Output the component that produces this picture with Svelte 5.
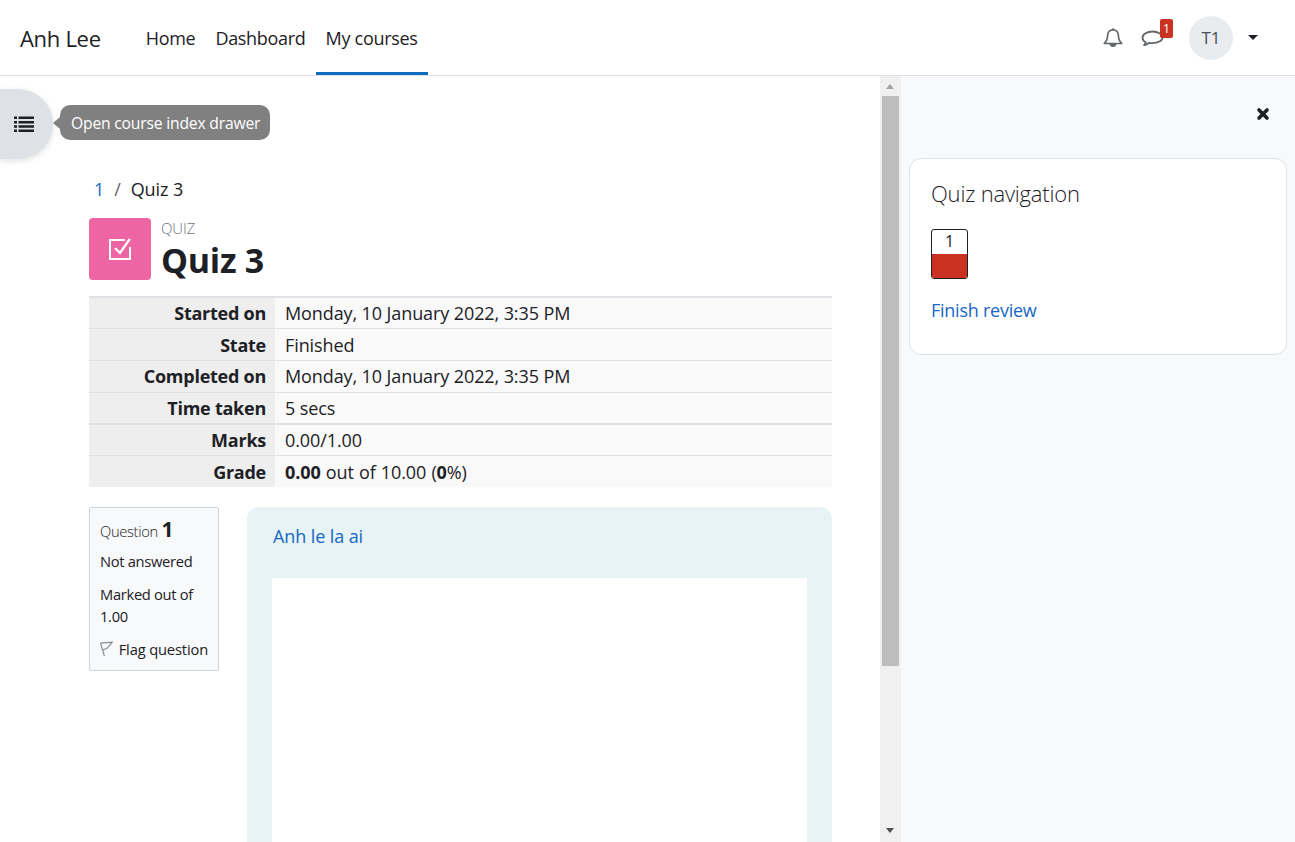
<script>
  const rows = [
    { label: 'Started on', value: 'Monday, 10 January 2022, 3:35 PM', short: true },
    { label: 'State', value: 'Finished', low: true },
    { label: 'Completed on', value: 'Monday, 10 January 2022, 3:35 PM' },
    { label: 'Time taken', value: '5 secs', thick: true },
    { label: 'Marks', value: '0.00/1.00', short: true }
  ];
</script>

<div class="page">
  <header class="topbar">
    <a class="brand" href="#a">Anh Lee</a>
    <nav class="nav">
      <a href="#a">Home</a>
      <a href="#a">Dashboard</a>
      <a href="#a" class="active">My courses</a>
    </nav>
    <div class="tools">
      <svg class="bell" width="22" height="22" viewBox="0 0 22 22" fill="none" stroke="#63676b" stroke-width="1.700" aria-hidden="true">
        <path d="M11 2.800c-3.600 0-5.400 2.700-5.400 5.800 0 4.400-1.400 6.200-3.300 7.900h17.400c-1.900-1.700-3.300-3.500-3.300-7.900 0-3.100-1.800-5.800-5.400-5.800z" stroke-linejoin="round"/>
        <path d="M8.500 17.500c.4 2.200 4.600 2.200 5 0z" fill="#63676b"/>
        <path d="M11 1.200v1.600"/>
      </svg>
      <span class="msg">
        <svg width="24" height="22" viewBox="0 0 24 22" fill="none" stroke="#63676b" stroke-width="1.800" aria-hidden="true">
          <path d="M11.500 4.500c-5.200 0-10 2.800-10 6.200 0 2 1.300 3.500 3.200 4.500-.2 1.200-.8 2.200-1.600 3 2-.3 3.700-1.200 4.700-2.400 1.200.2 2.400.3 3.700.3 5.200 0 10-2.400 10-5.400 0-3.400-4.800-6.200-10-6.200z" stroke-linejoin="round"/>
        </svg>
        <span class="badge">1</span>
      </span>
      <span class="avatar">T1</span>
      <span class="caret"></span>
    </div>
  </header>

  <div class="body">
    <main class="main">
      <div class="content">
        <div class="crumbs"><a href="#a">1</a><span class="sep">/</span><span>Quiz 3</span></div>
        <div class="heading">
          <span class="modicon">
            <svg width="22" height="22" viewBox="0 0 22 22" fill="none" stroke="#fff" stroke-width="2" aria-hidden="true">
              <path d="M21 9v12H1V2h15"/>
              <path d="M6 10l5 5L20.800 1" stroke-width="2.200"/>
            </svg>
          </span>
          <div class="titles">
            <div class="kicker">QUIZ</div>
            <h1>Quiz 3</h1>
          </div>
        </div>

        <table class="summary">
          <tbody>
            {#each rows as row}
              <tr class:thick={row.thick} class:short={row.short} class:low={row.low}>
                <th>{row.label}</th>
                <td>{row.value}</td>
              </tr>
            {/each}
            <tr class="low">
              <th>Grade</th>
              <td class="spaced"><b>0.00</b> out of 10.00 (<b>0</b>%)</td>
            </tr>
          </tbody>
        </table>

        <div class="question">
          <aside class="info">
            <div class="qno">Question <b>1</b></div>
            <div class="state">Not answered</div>
            <div class="grade">Marked out of 1.00</div>
            <div class="flag">
              <svg width="14" height="16" viewBox="0 0 14 16" fill="none" stroke="#84898e" stroke-width="1.200" aria-hidden="true">
                <path d="M.5 2l4 13M.5 2L12.500 1 7 7.500 2.500 9"/>
              </svg>
              <span>Flag question</span>
            </div>
          </aside>
          <div class="qbody">
            <a href="#a">Anh le la ai</a>
            <div class="frame"></div>
          </div>
        </div>
      </div>

      <div class="scrollbar">
        <span class="arrow up"></span>
        <span class="thumb"></span>
        <span class="arrow down"></span>
      </div>
    </main>

    <aside class="drawer">
      <div class="drawer-head">
        <svg width="14" height="14" viewBox="0 0 14 14" aria-hidden="true">
          <path d="M3 3l8 8M11 3l-8 8" stroke="#1d2125" stroke-width="3.600" stroke-linecap="round"/>
        </svg>
      </div>
      <section class="card">
        <h2>Quiz navigation</h2>
        <div class="qbtn"><span>1</span><i></i></div>
        <a href="#a">Finish review</a>
      </section>
    </aside>
  </div>

  <button class="toggle" aria-label="Open course index">
    <svg width="20" height="16" viewBox="0 0 20 16" fill="#1d2125" aria-hidden="true">
      <path d="M0 .5h3v2.600H0zM0 4.900h3v2.600H0zM0 9.200h3v2.600H0zM0 13.500h3v2.600H0zM4.500 .5H20v2.600H4.500zM4.500 4.900H20v2.600H4.500zM4.500 9.200H20v2.600H4.500zM4.500 13.500H20v2.600H4.500z"/>
    </svg>
  </button>
  <div class="tip">Open course index drawer</div>
</div>

<style>
  :global(body) {
    margin: 0;
    font-family: "Open Sans", "Noto Sans", sans-serif;
    color: #1d2125;
    background: #fff;
  }
  .page {
    position: relative;
    height: 842px;
    overflow: hidden;
    display: flex;
    flex-direction: column;
    font-size: 18px;
    letter-spacing: -0.1px;
  }
  a {
    color: #1668c4;
    text-decoration: none;
  }
  .topbar {
    height: 75px;
    flex: none;
    display: flex;
    align-items: stretch;
    border-bottom: 1px solid #dee2e6;
    padding: 0 37px 0 20px;
  }
  .brand {
    color: #1d2125;
    font-size: 22px;
    letter-spacing: -0.3px;
    align-self: center;
    margin-right: 35px;
  }
  .nav {
    display: flex;
  }
  .nav a {
    color: #1d2125;
    padding: 0 10px;
    letter-spacing: -0.3px;
    display: flex;
    align-items: center;
    border-bottom: 3px solid transparent;
    border-top: 3px solid transparent;
  }
  .nav a.active {
    border-bottom-color: #0f6cbf;
  }
  .tools {
    margin-left: auto;
    display: flex;
    align-items: center;
  }
  .bell {
    margin-right: 17px;
  }
  .msg {
    position: relative;
    width: 24px;
    height: 22px;
    margin-right: 24px;
  }
  .badge {
    position: absolute;
    left: 19px;
    top: -8px;
    width: 13px;
    height: 19px;
    border-radius: 2px;
    background: #ca3120;
    color: #fff;
    font-size: 13px;
    line-height: 19px;
    text-align: center;
    letter-spacing: 0;
  }
  .avatar {
    width: 44px;
    height: 44px;
    border-radius: 50%;
    background: #e9ecef;
    display: flex;
    align-items: center;
    justify-content: center;
    color: #495057;
    font-size: 17px;
    margin-right: 15px;
  }
  .caret {
    width: 0;
    height: 0;
    border-left: 5.500px solid transparent;
    border-right: 5.500px solid transparent;
    border-top: 5.500px solid #1d2125;
  }
  .body {
    flex: 1;
    display: flex;
    min-height: 0;
  }
  .main {
    flex: 1;
    display: flex;
    min-width: 0;
    overflow: hidden;
  }
  .content {
    flex: 1;
    padding: 101px 48px 0 89px;
    min-width: 0;
  }
  .crumbs {
    display: flex;
    gap: 10px;
    line-height: 25px;
    margin-left: 5px;
    color: #1d2125;
  }
  .sep {
    color: #5f6266;
  }
  .heading {
    display: flex;
    margin-top: 16px;
  }
  .modicon {
    width: 62px;
    height: 62px;
    border-radius: 4px;
    background: #ee65a3;
    display: flex;
    align-items: center;
    justify-content: center;
    margin-right: 10px;
  }
  .titles {
    display: flex;
    flex-direction: column;
  }
  .kicker {
    color: #6a737b;
    font-size: 15px;
    line-height: 20px;
    font-weight: 300;
  }
  h1 {
    margin: 2px 0 0;
    font-size: 34px;
    line-height: 41px;
    letter-spacing: -0.3px;
    font-weight: 700;
  }
  .summary {
    border-collapse: collapse;
    width: 743px;
    margin-top: 15px;
    border-top: 2px solid #dee2e6;
    table-layout: fixed;
  }
  .summary tr {
    height: 32px;
    border-bottom: 1px solid #dee2e6;
  }
  .summary tr.short {
    height: 31px;
  }
  .summary tr:last-child {
    border-bottom: 0;
  }
  .summary tr.thick {
    border-bottom: 2px solid #dee2e6;
  }
  .summary th {
    width: 186px;
    box-sizing: border-box;
    background: #eee;
    text-align: right;
    padding: 0 9px 0 0;
    font-weight: 700;
    letter-spacing: -0.25px;
  }
  .summary td {
    background: #f9f9f9;
    padding: 0 0 0 10px;
  }
  .summary tr.low th,
  .summary tr.low td {
    padding-top: 2px;
  }
  .summary td.spaced {
    word-spacing: 0.6px;
  }
  .question {
    display: flex;
    margin-top: 20px;
    gap: 28px;
    align-items: flex-start;
  }
  .info {
    width: 130px;
    height: 164px;
    box-sizing: border-box;
    flex: none;
    border: 1px solid #cfd4da;
    border-radius: 2px;
    background: #f8f9fa;
    padding: 7px 10px;
    font-size: 14.700px;
    letter-spacing: -0.3px;
    line-height: 22px;
  }
  .qno {
    font-weight: 300;
    line-height: 28px;
  }
  .qno b {
    font-size: 21px;
    font-weight: 700;
  }
  .state {
    margin-top: 5px;
  }
  .grade {
    margin-top: 11px;
  }
  .flag {
    display: flex;
    gap: 5px;
    align-items: center;
    margin-top: 11px;
    letter-spacing: -0.15px;
  }
  .flag span {
    white-space: nowrap;
  }
  .qbody {
    flex: 1;
    background: #e7f3f5;
    border-radius: 12px 12px 0 0;
    padding: 16px 25px 0;
    height: 340px;
  }
  .qbody a {
    display: block;
    line-height: 26px;
    margin-left: 1px;
  }
  .frame {
    background: #fff;
    height: 300px;
    margin-top: 29px;
  }
  .scrollbar {
    width: 21px;
    flex: none;
    background: #f0f0f0;
    position: relative;
    height: 766px;
  }
  .thumb {
    position: absolute;
    left: 2px;
    top: 20px;
    width: 17px;
    height: 570px;
    background: #bdbdbd;
  }
  .arrow {
    position: absolute;
    left: 6px;
    width: 0;
    height: 0;
    border-left: 4.500px solid transparent;
    border-right: 4.500px solid transparent;
  }
  .arrow.up {
    top: 8px;
    border-bottom: 5px solid #a3a3a3;
  }
  .arrow.down {
    bottom: 9px;
    border-top: 5px solid #505050;
  }
  .drawer {
    width: 394px;
    flex: none;
    background: #f8f9fa;
    box-sizing: border-box;
    padding: 0 8px 0 8px;
  }
  .drawer-head {
    height: 82px;
    display: flex;
    justify-content: flex-end;
    align-items: flex-start;
    padding: 31px 17px 0 0;
    box-sizing: border-box;
  }
  .card {
    height: 197px;
    box-sizing: border-box;
    background: #fff;
    border: 1px solid #dee2e6;
    border-radius: 12px;
    padding: 18px 21px;
  }
  h2 {
    margin: 0;
    font-weight: 300;
    font-size: 22px;
    letter-spacing: -0.2px;
    line-height: 32px;
  }
  .qbtn {
    width: 37px;
    height: 50px;
    box-sizing: border-box;
    border: 1px solid #1d2125;
    border-radius: 3px;
    margin-top: 20px;
    overflow: hidden;
    display: flex;
    flex-direction: column;
    text-align: center;
    color: #1d2125;
    font-size: 16px;
  }
  .qbtn span {
    height: 24px;
    line-height: 23px;
  }
  .qbtn i {
    flex: 1;
    background: #ca3120;
  }
  .card a {
    display: block;
    margin-top: 18px;
    line-height: 26px;
    letter-spacing: -0.25px;
  }
  .toggle {
    position: absolute;
    left: 0;
    top: 89px;
    width: 53px;
    height: 70px;
    border: 0;
    padding: 0 5px 0 0;
    background: #dee2e6;
    border-radius: 0 35px 35px 0;
    box-shadow: 0 2px 6px rgba(0, 0, 0, 0.12);
    display: flex;
    align-items: center;
    justify-content: center;
  }
  .tip {
    position: absolute;
    left: 60px;
    top: 105px;
    height: 35px;
    line-height: 36px;
    padding: 0 10px 0 11px;
    background: #808080;
    color: #fff;
    border-radius: 10px;
    font-size: 15.700px;
    letter-spacing: -0.2px;
    white-space: nowrap;
  }
  .tip::before {
    content: "";
    position: absolute;
    left: -7px;
    top: 12px;
    border-top: 6px solid transparent;
    border-bottom: 6px solid transparent;
    border-right: 7px solid #808080;
  }
</style>
